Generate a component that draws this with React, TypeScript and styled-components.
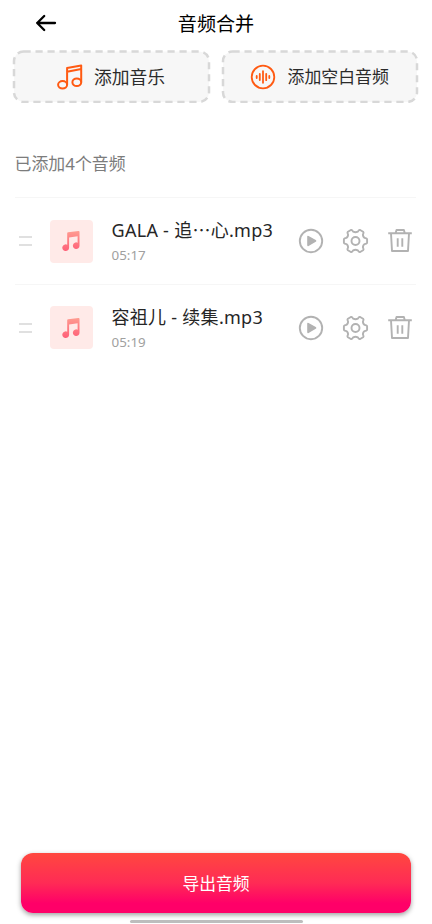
import React from "react";
import styled, { createGlobalStyle } from "styled-components";

const Global = createGlobalStyle`
  * { box-sizing: border-box; }
  body { margin: 0; background: #fff; }
  svg { display: block; flex: none; }
  button { border: 0; padding: 0; background: none; font: inherit; color: inherit; }
`;

const Screen = styled.main`
  width: 432px;
  height: 924px;
  display: flex;
  flex-direction: column;
  overflow: hidden;
  background: #fff;
  color: #2b2b2b;
  font-family: "Noto Sans", "Noto Sans CJK SC", sans-serif;
`;

const Header = styled.header`
  height: 50px;
  flex: none;
  display: grid;
  grid-template-columns: 80px 1fr 80px;
  align-items: center;
  padding-bottom: 5px;
`;

const BackButton = styled.button`
  padding-left: 35px;
`;

const Title = styled.h1`
  margin: 0;
  text-align: center;
  font-size: 19.1px;
  line-height: 26px;
  font-weight: 400;
  color: #000;
  font-family: "Noto Sans CJK SC", sans-serif;
`;

const AddBar = styled.section`
  display: grid;
  grid-template-columns: 199px 198px;
  gap: 10px;
  padding-left: 12px;
  height: 53px;
  flex: none;
`;

const AddButton = styled.button<{ $gap: number; $size: number; $inset: number }>`
  position: relative;
  display: flex;
  align-items: center;
  padding-left: ${(p) => p.$inset}px;
  gap: ${(p) => p.$gap}px;
  font-family: "Noto Sans CJK SC", sans-serif;
  font-size: ${(p) => p.$size}px;
  line-height: 24px;
`;

const DashedFrame = styled.svg`
  position: absolute;
  inset: 0;
  width: 100%;
  height: 100%;
`;

const AddLabel = styled.span`
  position: relative;
  top: -1px;
  white-space: nowrap;
`;

const IconLayer = styled.span`
  position: relative;
`;

const Count = styled.p`
  margin: 48px 0 0 14.6px;
  height: 26px;
  flex: none;
  font-size: 16.9px;
  line-height: 26px;
  color: #7c7c7c;
  white-space: nowrap;
`;

const List = styled.ul`
  list-style: none;
  margin: 20.4px 0 0;
  padding: 0 16px 0 15px;
  flex: 1;
`;

const Row = styled.li`
  height: 86.6px;
  border-top: 1px solid #f6f6f6;
  display: flex;
  align-items: center;
  padding: 0 3px 0 4px;
`;

const Handle = styled.span`
  width: 13px;
  height: 10px;
  border: solid #e0e0e0;
  border-width: 2px 0;
  margin-right: 18px;
  flex: none;
`;

const Tile = styled.span`
  width: 43px;
  height: 43px;
  border-radius: 4px;
  background: #ffeae8;
  display: grid;
  place-items: center;
  padding: 0 1.5px 0.5px 0;
  margin-right: 18.5px;
  flex: none;
`;

const Info = styled.div`
  flex: 1;
  min-width: 0;
  padding-top: 3px;
`;

const Name = styled.div`
  font-size: 18px;
  line-height: 25px;
  letter-spacing: 0.28px;
  color: #262626;
  white-space: nowrap;
`;

const Time = styled.div`
  font-size: 13.4px;
  line-height: 24px;
  color: #a0a0a0;
`;

const Actions = styled.div`
  display: flex;
  gap: 18px;
  color: #b2b2b2;
`;

const Footer = styled.footer`
  flex: none;
  height: 71px;
  display: flex;
  flex-direction: column;
  align-items: center;
`;

const ExportButton = styled.button`
  width: 390px;
  height: 60px;
  flex: none;
  border-radius: 12px;
  background: linear-gradient(180deg, #ff483f 0%, #ff2b55 50%, #ff0068 84%, #ff0068 100%);
  box-shadow: 0 2px 5px rgba(0, 0, 0, 0.38);
  color: #fff;
  font-family: "Noto Sans CJK SC", sans-serif;
  font-size: 16.8px;
  line-height: 24px;
`;

const HomeIndicator = styled.span`
  width: 173px;
  height: 3px;
  border-radius: 2px;
  margin-top: 7px;
  background: #bdbdbd;
  flex: none;
`;

function Frame({ width }: { width: number }) {
  return (
    <DashedFrame viewBox={`0 0 ${width} 53`}>
      <rect x="2" y="1.5" width={width - 4} height="50.4" rx="9.5" fill="#f7f7f7" stroke="#d8d8d8" strokeWidth="2.5" strokeDasharray="7.2 4.8" />
    </DashedFrame>
  );
}

const BackIcon = () => (
  <svg width="22" height="18" viewBox="0 0 22 18" fill="none" stroke="#000" strokeWidth="2.3" strokeLinecap="round" strokeLinejoin="round">
    <path d="M20 9H2.2M9.2 2 2.2 9l7 7" />
  </svg>
);

const NotesIcon = () => (
  <svg width="26" height="26" viewBox="0 0 26 26" fill="none" stroke="#ff5a12" strokeWidth="2" strokeLinejoin="round">
    <ellipse cx="5.6" cy="20.8" rx="4.5" ry="3.7" />
    <ellipse cx="19.8" cy="18.3" rx="4.4" ry="3.8" />
    <path d="M10.1 20.8V4L24.2 1.5v16.8M10.1 7.8l14.1-2.7" />
  </svg>
);

const WaveIcon = () => (
  <svg width="26" height="26" viewBox="0 0 26 26" fill="none" stroke="#ff5a12" strokeWidth="1.8" strokeLinecap="round">
    <circle cx="13" cy="13" r="11.3" />
    <path d="M6.7 12v2M9.8 10v6M13 7.2v11.6M16.2 9.8v6.4M19.3 12v2" />
  </svg>
);

const SongIcon = ({ id }: { id: string }) => (
  <svg width="18" height="20" viewBox="0 0 18 20">
    <defs>
      <linearGradient id={id} x1="0" y1="0" x2="0" y2="1">
        <stop offset="0" stopColor="#ff9b90" />
        <stop offset="1" stopColor="#ff6078" />
      </linearGradient>
    </defs>
    <path fill={`url(#${id})`} d="M5.2 2.3Q5.2 1.4 6.1 1.2L16.5 .1Q17.5 0 17.5 1V14.7A3.3 3.3 0 1 1 15.6 11.7V5.3L7.1 6.5V16.7A3.4 3.3 0 1 1 5.2 13.7Z" />
  </svg>
);

const PlayIcon = () => (
  <svg width="26" height="26" viewBox="0 0 26 26">
    <circle cx="13" cy="13" r="11.2" fill="none" stroke="currentColor" strokeWidth="1.9" />
    <path d="M9.2 8.7q0-1.6 1.4-.8l7.2 4.1q1.4.9 0 1.8l-7.2 4.1q-1.4.8-1.4-.8z" fill="currentColor" />
  </svg>
);

const GearIcon = () => (
  <svg width="27" height="26" viewBox="0 0 27 26" fill="none" stroke="currentColor" strokeWidth="1.9" strokeLinejoin="round">
    <circle cx="13.5" cy="13" r="4" />
    <path d="M8.9 2Q9.7 1.7 10.3 2.5L11.2 3.6Q13.5 4.8 15.8 3.6L16.7 2.5Q17.3 1.7 18.1 2L21.1 3.8Q21.8 4.4 21.4 5.3L20.9 6.8Q21 9.5 23.3 10.1L24.4 10.4Q25.1 10.6 25.1 11.4V14.6Q25.1 15.4 24.4 15.6L23.3 15.9Q21 16.5 20.9 19.2L21.4 20.7Q21.8 21.6 21.1 22.2L18.1 24Q17.3 24.3 16.7 23.5L15.8 22.4Q13.5 21.2 11.2 22.4L10.3 23.5Q9.7 24.3 8.9 24L5.9 22.2Q5.2 21.6 5.6 20.7L6.1 19.2Q6 16.5 3.7 15.9L2.6 15.6Q1.9 15.4 1.9 14.6V11.4Q1.9 10.6 2.6 10.4L3.7 10.1Q6 9.5 6.1 6.8L5.6 5.3Q5.2 4.4 5.9 3.8Z" />
  </svg>
);

const TrashIcon = () => (
  <svg width="26" height="26" viewBox="0 0 26 26" fill="none" stroke="currentColor" strokeWidth="1.9" strokeLinejoin="round">
    <path d="M1.2 5.3h23.6M8.6 5.3l.9-3.3h7.4l.9 3.3M4 5.3l1 17.7h16l1-17.7M10.7 10.2v8.6M15.3 10.2v8.6" />
  </svg>
);

const songs = [
  { name: "GALA - 追⋯心.mp3", time: "05:17" },
  { name: "容祖儿 - 续集.mp3", time: "05:19" },
];

export default function App() {
  return (
    <Screen>
      <Global />
      <Header>
        <BackButton aria-label="返回"><BackIcon /></BackButton>
        <Title>音频合并</Title>
      </Header>
      <AddBar>
        <AddButton $gap={11} $size={17.8} $inset={45}>
          <Frame width={199} />
          <IconLayer><NotesIcon /></IconLayer>
          <AddLabel>添加音乐</AddLabel>
        </AddButton>
        <AddButton $gap={11.5} $size={16.9} $inset={29}>
          <Frame width={198} />
          <IconLayer><WaveIcon /></IconLayer>
          <AddLabel>添加空白音频</AddLabel>
        </AddButton>
      </AddBar>
      <Count>已添加4个音频</Count>
      <List>
        {songs.map((song, i) => (
          <Row key={song.name}>
            <Handle />
            <Tile><SongIcon id={`song-${i}`} /></Tile>
            <Info>
              <Name>{song.name}</Name>
              <Time>{song.time}</Time>
            </Info>
            <Actions>
              <button aria-label="播放"><PlayIcon /></button>
              <button aria-label="设置"><GearIcon /></button>
              <button aria-label="删除"><TrashIcon /></button>
            </Actions>
          </Row>
        ))}
      </List>
      <Footer>
        <ExportButton>导出音频</ExportButton>
        <HomeIndicator />
      </Footer>
    </Screen>
  );
}
